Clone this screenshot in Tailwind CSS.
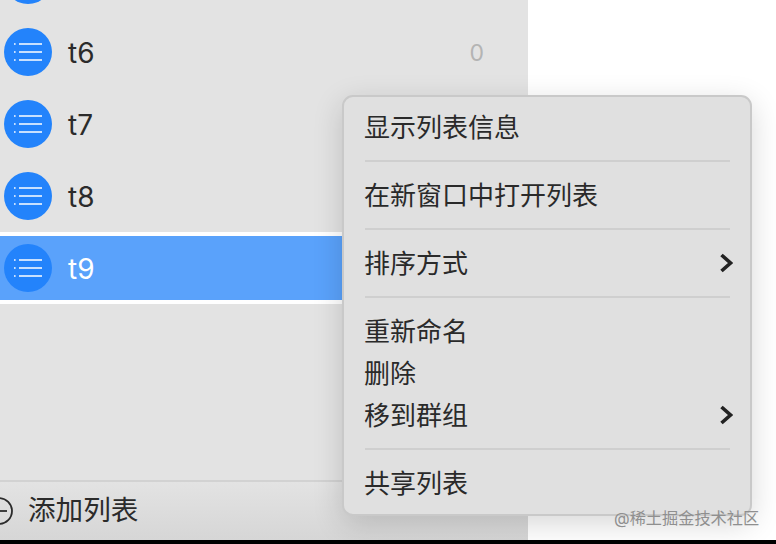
<!DOCTYPE html>
<html lang="zh-CN">
<head>
  <meta charset="UTF-8" />
  <title>列表菜单</title>
  <script src="https://cdn.jsdelivr.net/npm/@tailwindcss/browser@4"></script>
</head>
<body class="w-[776px] h-[544px] overflow-hidden bg-white font-['Inter','Noto_Sans_CJK_SC',sans-serif]">
  <div class="relative w-full h-[540px] overflow-hidden">
    <!-- sidebar -->
    <aside class="w-[528px] h-full flex flex-col overflow-hidden bg-[#e3e3e3]">
      <div class="h-[481px] overflow-hidden shrink-0">
        <ul class="-mt-[56px]">
          <li class="h-[72px] flex items-center pl-1">
            <svg class="w-12 h-12 shrink-0" viewBox="0 0 48 48"><circle cx="24" cy="24" r="24" fill="#2383fb"/></svg>
          </li>
          <li class="h-[72px] flex items-center pl-1">
            <svg class="w-12 h-12 shrink-0" viewBox="0 0 48 48"><circle cx="24" cy="24" r="24" fill="#2383fb"/><g stroke="#fff" stroke-width="1.7"><path d="M15 16h23M15 24h23M15 32h23"/><path d="M10 16h2M10 24h2M10 32h2" stroke-dasharray="1.6 1"/></g></svg>
            <span class="ml-4 pt-0.5 text-[28px] text-[#2b2b2b]">t6</span>
            <span class="ml-auto mr-[44px] pt-0.5 text-[23px] text-[#b4b4b4]">0</span>
          </li>
          <li class="h-[72px] flex items-center pl-1">
            <svg class="w-12 h-12 shrink-0" viewBox="0 0 48 48"><circle cx="24" cy="24" r="24" fill="#2383fb"/><g stroke="#fff" stroke-width="1.7"><path d="M15 16h23M15 24h23M15 32h23"/><path d="M10 16h2M10 24h2M10 32h2" stroke-dasharray="1.6 1"/></g></svg>
            <span class="ml-4 pt-0.5 text-[28px] text-[#2b2b2b]">t7</span>
          </li>
          <li class="h-[72px] flex items-center pl-1">
            <svg class="w-12 h-12 shrink-0" viewBox="0 0 48 48"><circle cx="24" cy="24" r="24" fill="#2383fb"/><g stroke="#fff" stroke-width="1.7"><path d="M15 16h23M15 24h23M15 32h23"/><path d="M10 16h2M10 24h2M10 32h2" stroke-dasharray="1.6 1"/></g></svg>
            <span class="ml-4 pt-0.5 text-[28px] text-[#2b2b2b]">t8</span>
          </li>
          <li class="h-[72px] flex items-center pl-1 bg-[#5aa2fb] border-y-4 border-white">
            <svg class="w-12 h-12 shrink-0" viewBox="0 0 48 48"><circle cx="24" cy="24" r="24" fill="#2383fb"/><g stroke="#fff" stroke-width="1.7"><path d="M15 16h23M15 24h23M15 32h23"/><path d="M10 16h2M10 24h2M10 32h2" stroke-dasharray="1.6 1"/></g></svg>
            <span class="ml-4 pt-0.5 text-[28px] text-white">t9</span>
          </li>
        </ul>
      </div>
      <!-- footer -->
      <div class="flex-1 flex items-center gap-[15px] border-t-2 border-[#d2d2d2] bg-gradient-to-b from-[#e3e3e3] to-[#d6d6d6] -mt-px">
        <svg class="w-[13px] h-[28px] shrink-0" viewBox="0 0 13 28" fill="none" stroke="#2b2b2b" stroke-width="1.8"><circle cx="-1" cy="14" r="13"/><path d="M0 14h7"/></svg>
        <span class="text-[27.6px] text-[#2b2b2b]">添加列表</span>
      </div>
    </aside>

    <!-- context menu -->
    <div class="absolute left-[342px] top-[95px] w-[410px] h-[421px] pl-[21px] pr-[20px] py-[9px] rounded-[11px] border-2 border-[#c9c9c9] bg-[#e0e0e0] text-[26px] leading-[44px] text-[#2a2a2a] shadow-[0_8px_30px_rgba(0,0,0,0.16)]">
      <div class="h-[42px] -ml-px">显示列表信息</div>
      <div class="my-3 h-0.5 bg-[#cfcfcf]"></div>
      <div class="h-[42px] -ml-px">在新窗口中打开列表</div>
      <div class="my-3 h-0.5 bg-[#cfcfcf]"></div>
      <div class="h-[42px] -ml-px flex items-start justify-between">
        <span>排序方式</span>
        <svg class="self-center w-[14px] h-[20px] -mr-[3px]" viewBox="0 0 14 20" fill="none" stroke="#222" stroke-width="3.6"><path d="M2.5 2l9 8-9 8"/></svg>
      </div>
      <div class="my-3 h-0.5 bg-[#cfcfcf]"></div>
      <div class="h-[42px] -ml-px">重新命名</div>
      <div class="h-[42px] -ml-px">删除</div>
      <div class="h-[42px] -ml-px flex items-start justify-between">
        <span>移到群组</span>
        <svg class="self-center w-[14px] h-[20px] -mr-[3px]" viewBox="0 0 14 20" fill="none" stroke="#222" stroke-width="3.6"><path d="M2.5 2l9 8-9 8"/></svg>
      </div>
      <div class="my-3 h-0.5 bg-[#cfcfcf]"></div>
      <div class="h-[42px] -ml-px">共享列表</div>
    </div>

    <!-- watermark -->
    <div class="absolute left-[614px] top-[507px] text-[16.2px] leading-[22px] whitespace-nowrap text-[#8f8f8f]">@稀土掘金技术社区</div>
  </div>
  <div class="h-1 bg-black"></div>
</body>
</html>
